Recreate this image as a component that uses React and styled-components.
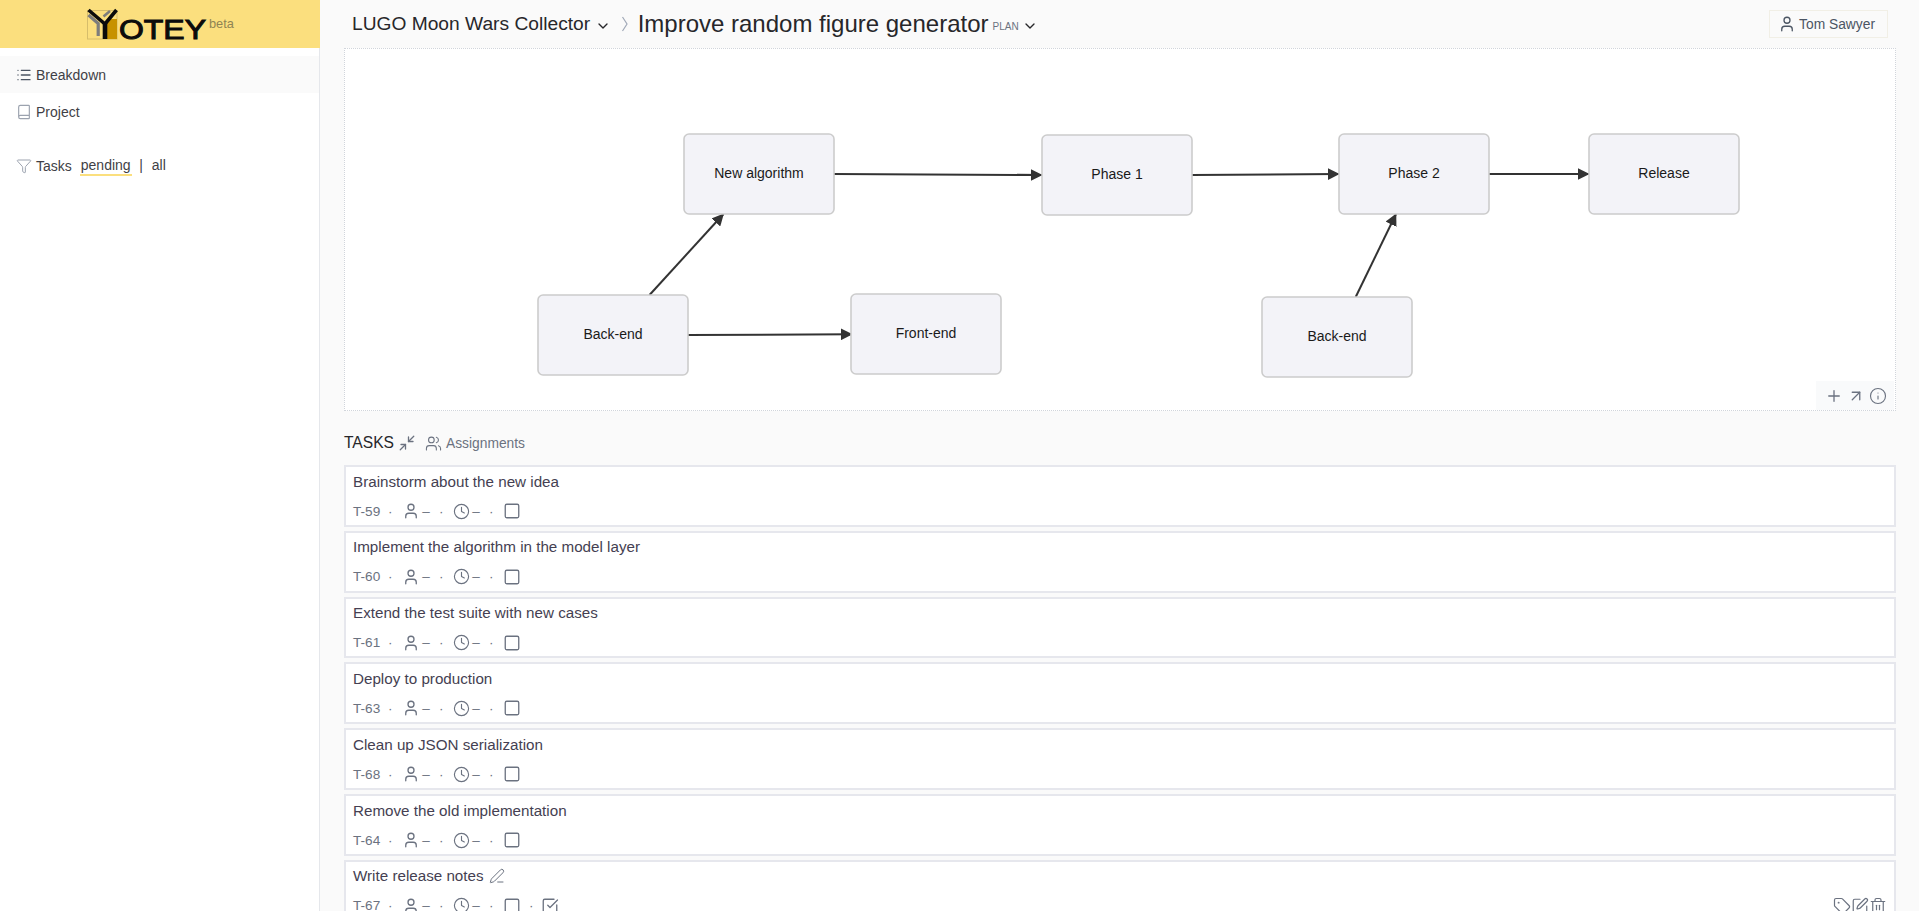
import React from "react";
import styled, { createGlobalStyle } from "styled-components";
import {
  ArrowUpRight,
  Book,
  ChevronDown,
  Clock,
  Funnel,
  Info,
  List,
  Minimize2,
  PenLine,
  Plus,
  Square,
  SquareCheckBig,
  SquarePen,
  Tag,
  Trash2,
  User,
  Users,
} from "lucide-react";

const GlobalStyle = createGlobalStyle`
  html, body {
    margin: 0;
    height: 100%;
    overflow: hidden;
    background: #fff;
    font-family: "Liberation Sans", Arial, sans-serif;
  }
  * {
    box-sizing: border-box;
  }
`;

const Layout = styled.div`
  display: flex;
  height: 100vh;
`;

const Sidebar = styled.aside`
  flex: 0 0 320px;
  background: #fff;
  border-right: 1px solid #e5e7eb;
`;

const Brand = styled.div`
  height: 48px;
  margin-right: -1px;
  background: #fbdf7e;
  display: flex;
  align-items: flex-start;
  padding: 8px 0 0 87px;
`;

const BetaTag = styled.span`
  margin-top: 8px;
  font-size: 12.8px;
  color: #8f8453;
`;

const Nav = styled.nav`
  padding-top: 8px;
`;

const NavItem = styled.a`
  height: 37px;
  padding-left: 16px;
  display: flex;
  align-items: center;
  gap: 4px;
  font-size: 14px;
  color: #3f3f46;
  background: ${(p) => (p.$active ? "#fafafa" : "transparent")};
  svg {
    color: ${(p) => (p.$active ? "#4b5563" : "#9ca3af")};
  }
`;

const FilterRow = styled.div`
  margin-top: 17px;
  height: 37px;
  padding-left: 16px;
  display: flex;
  align-items: center;
  font-size: 14px;
  color: #3f3f46;
  svg {
    color: #9ca3af;
    margin-right: 4px;
  }
`;

const FilterOption = styled.span`
  margin: 2px 0 0 ${(p) => p.$gap}px;
  padding: 0 1px 1px;
  border-bottom: 2px solid ${(p) => (p.$active ? "#fbdf7e" : "transparent")};
`;

const Main = styled.main`
  flex: 1;
  min-width: 0;
  background: #fafafa;
  padding: 0 23px 0 24px;
  overflow: hidden;
`;

const TopBar = styled.header`
  height: 48px;
  padding: 0 8px;
  display: flex;
  align-items: center;
  color: #27272a;
`;

const Crumb = styled.span`
  font-size: 19.2px;
`;

const CrumbCaret = styled(ChevronDown)`
  margin: 3px 0 0 5px;
  color: #27272a;
`;

const StageCaret = styled(ChevronDown)`
  margin: 3px 0 0 3.5px;
  color: #27272a;
`;

const Separator = styled.svg`
  margin: 0 8.5px 0 10px;
  color: #a1a9b8;
`;

const PageTitle = styled.h1`
  margin: 0;
  font-size: 24px;
  font-weight: 400;
`;

const Stage = styled.span`
  margin: 5px 0 0 4px;
  font-size: 10px;
  color: #6b7280;
`;

const UserButton = styled.button`
  margin-left: auto;
  height: 28px;
  padding: 0 12px 0 7.5px;
  display: flex;
  align-items: center;
  gap: 3.4px;
  font: 13.8px "Liberation Sans", Arial, sans-serif;
  color: #4b5563;
  background: #fafafa;
  border: 1px solid #f1efe6;
`;

const DiagramPanel = styled.section`
  position: relative;
  height: 363px;
  background: #fff;
  border: 1px dotted #d1d5db;
`;

const DiagramSvg = styled.svg`
  display: block;
  width: 100%;
  height: 100%;
`;

const DiagramTools = styled.div`
  position: absolute;
  right: 1px;
  bottom: 0;
  width: 78px;
  height: 29px;
  padding-right: 7px;
  display: flex;
  align-items: center;
  justify-content: flex-end;
  gap: 4px;
  background: #f9fafb;
  color: #6b7280;
`;

const TasksHeader = styled.div`
  height: 54px;
  padding-top: 10px;
  display: flex;
  align-items: center;
`;

const TasksTitle = styled.h2`
  margin: 0;
  font-size: 15.6px;
  font-weight: 400;
  color: #27272a;
`;

const CollapseIcon = styled(Minimize2)`
  margin-left: 4px;
  color: #6b7280;
`;

const AssignmentsLink = styled.a`
  margin-left: 9px;
  display: flex;
  align-items: center;
  gap: 4px;
  font-size: 13.8px;
  color: #6b7280;
`;

const TaskList = styled.div`
  display: flex;
  flex-direction: column;
  gap: 4px;
`;

const TaskCard = styled.article`
  height: 61.83px;
  flex: none;
  padding: 4px 7px 0;
  background: #fff;
  border: 2px solid #e6e7ed;
`;

const TaskTitle = styled.div`
  height: 20px;
  display: flex;
  align-items: center;
  font-size: 15.2px;
  color: #453f52;
  svg {
    margin-left: 5px;
    color: #6b7280;
  }
`;

const TaskMeta = styled.div`
  margin-top: 10px;
  height: 20px;
  display: flex;
  align-items: center;
  font-size: 13.6px;
  color: #6b7280;
`;

const MetaDot = styled.span`
  width: 20px;
  text-align: center;
  & + svg {
    margin-left: 2px;
  }
`;

const MetaDash = styled.span`
  margin-left: 2px;
  margin-right: 1.5px;
`;

const DoneIcon = styled(SquareCheckBig)`
  && {
    margin-left: -0.4px;
  }
`;

const TaskActions = styled.div`
  margin-left: auto;
  display: flex;
  color: #6b7280;
`;

const Logo = () => (
  <svg width="122" height="36" viewBox="87 8 122 36">
    <rect x="87.5" y="10.5" width="29.5" height="28.5" fill="none" stroke="#d6bd6b" />
    <rect x="107" y="19" width="10" height="20" fill="#c79200" />
    <path d="M88.5 15 L98.2 23.5 V36" fill="none" stroke="#7d7d7d" strokeWidth="3.2" />
    <path d="M103.5 16.5 L110 11" fill="none" stroke="#7d7d7d" strokeWidth="2.6" />
    <path d="M88.5 10 L105 24 L116.5 10" fill="none" stroke="#0b0b0b" strokeWidth="3.6" />
    <rect x="102.7" y="23" width="4.6" height="16" fill="#0b0b0b" />
    <text
      x="119"
      y="38.5"
      fontFamily="'Liberation Sans', Arial, sans-serif"
      fontSize="27"
      textLength="87"
      lengthAdjust="spacingAndGlyphs"
      fill="#0b0b0b"
      stroke="#0b0b0b"
      strokeWidth="1"
    >
      OTEY
    </text>
  </svg>
);

const nodes = [
  { label: "New algorithm", x: 684, y: 134 },
  { label: "Back-end", x: 538, y: 295 },
  { label: "Front-end", x: 851, y: 294 },
  { label: "Phase 1", x: 1042, y: 135 },
  { label: "Phase 2", x: 1339, y: 134 },
  { label: "Back-end", x: 1262, y: 297 },
  { label: "Release", x: 1589, y: 134 },
];

const edges = [
  "M834 174 L1042 175",
  "M1192 175 L1339 174",
  "M1489 174 L1589 174",
  "M649.5 295 L723.5 214",
  "M688 335 L852 334.3",
  "M1355.7 297 L1396 214",
];

const Diagram = () => (
  <DiagramSvg viewBox="345 49 1550 361" preserveAspectRatio="xMinYMin">
    <defs>
      <marker id="head" viewBox="0 0 10 10" refX="9.5" refY="5" markerUnits="userSpaceOnUse" markerWidth="12" markerHeight="12" orient="auto">
        <path d="M0 0 L10 5 L0 10 Z" fill="#333" />
      </marker>
    </defs>
    {edges.map((d) => (
      <path key={d} d={d} fill="none" stroke="#333" strokeWidth="2" markerEnd="url(#head)" />
    ))}
    {nodes.map((n) => (
      <g key={n.label + n.x}>
        <rect x={n.x} y={n.y} width="150" height="80" rx="5" fill="#f3f3f8" stroke="#ccc" strokeWidth="1.6" />
        <text
          x={n.x + 75}
          y={n.y + 44}
          textAnchor="middle"
          fontFamily="'Liberation Sans', Arial, sans-serif"
          fontSize="14"
          fill="#1a1a1a"
        >
          {n.label}
        </text>
      </g>
    ))}
  </DiagramSvg>
);

const tasks = [
  { id: "T-59", title: "Brainstorm about the new idea" },
  { id: "T-60", title: "Implement the algorithm in the model layer" },
  { id: "T-61", title: "Extend the test suite with new cases" },
  { id: "T-63", title: "Deploy to production" },
  { id: "T-68", title: "Clean up JSON serialization" },
  { id: "T-64", title: "Remove the old implementation" },
  { id: "T-67", title: "Write release notes", editable: true },
];

const Task = ({ task }) => (
  <TaskCard>
    <TaskTitle>
      {task.title}
      {task.editable && <PenLine size={16} strokeWidth={1.5} />}
    </TaskTitle>
    <TaskMeta>
      {task.id}
      <MetaDot>·</MetaDot>
      <User size={18} strokeWidth={1.75} />
      <MetaDash>–</MetaDash>
      <MetaDot>·</MetaDot>
      <Clock size={17} strokeWidth={1.6} />
      <MetaDash>–</MetaDash>
      <MetaDot>·</MetaDot>
      <Square size={18} strokeWidth={1.75} />
      {task.editable && (
        <>
          <MetaDot>·</MetaDot>
          <DoneIcon size={18} strokeWidth={1.75} />
          <TaskActions>
            <Tag size={18} strokeWidth={1.6} />
            <SquarePen size={18} strokeWidth={1.6} />
            <Trash2 size={18} strokeWidth={1.6} />
          </TaskActions>
        </>
      )}
    </TaskMeta>
  </TaskCard>
);

const App = () => (
  <>
    <GlobalStyle />
    <Layout>
      <Sidebar>
        <Brand>
          <Logo />
          <BetaTag>beta</BetaTag>
        </Brand>
        <Nav>
          <NavItem $active>
            <List size={16} strokeWidth={2} />
            Breakdown
          </NavItem>
          <NavItem>
            <Book size={16} strokeWidth={1.75} />
            Project
          </NavItem>
        </Nav>
        <FilterRow>
          <Funnel size={16} strokeWidth={1.5} />
          Tasks
          <FilterOption $gap={8} $active>pending</FilterOption>
          <FilterOption $gap={6.5}>|</FilterOption>
          <FilterOption $gap={7}>all</FilterOption>
        </FilterRow>
      </Sidebar>
      <Main>
        <TopBar>
          <Crumb>LUGO Moon Wars Collector</Crumb>
          <CrumbCaret size={16} strokeWidth={2} />
          <Separator width="8" height="18" viewBox="0 0 8 18">
            <path d="M1.5 2 L6 9 L1.5 16" fill="none" stroke="currentColor" strokeWidth="1.2" />
          </Separator>
          <PageTitle>Improve random figure generator</PageTitle>
          <Stage>PLAN</Stage>
          <StageCaret size={16} strokeWidth={2} />
          <UserButton>
            <User size={18} strokeWidth={1.75} />
            Tom Sawyer
          </UserButton>
        </TopBar>
        <DiagramPanel>
          <Diagram />
          <DiagramTools>
            <Plus size={18} strokeWidth={1.75} />
            <ArrowUpRight size={18} strokeWidth={1.75} />
            <Info size={18} strokeWidth={1.5} />
          </DiagramTools>
        </DiagramPanel>
        <TasksHeader>
          <TasksTitle>TASKS</TasksTitle>
          <CollapseIcon size={18} strokeWidth={1.75} />
          <AssignmentsLink>
            <Users size={17} strokeWidth={1.5} />
            Assignments
          </AssignmentsLink>
        </TasksHeader>
        <TaskList>
          {tasks.map((t) => (
            <Task key={t.id} task={t} />
          ))}
        </TaskList>
      </Main>
    </Layout>
  </>
);

export default App;
